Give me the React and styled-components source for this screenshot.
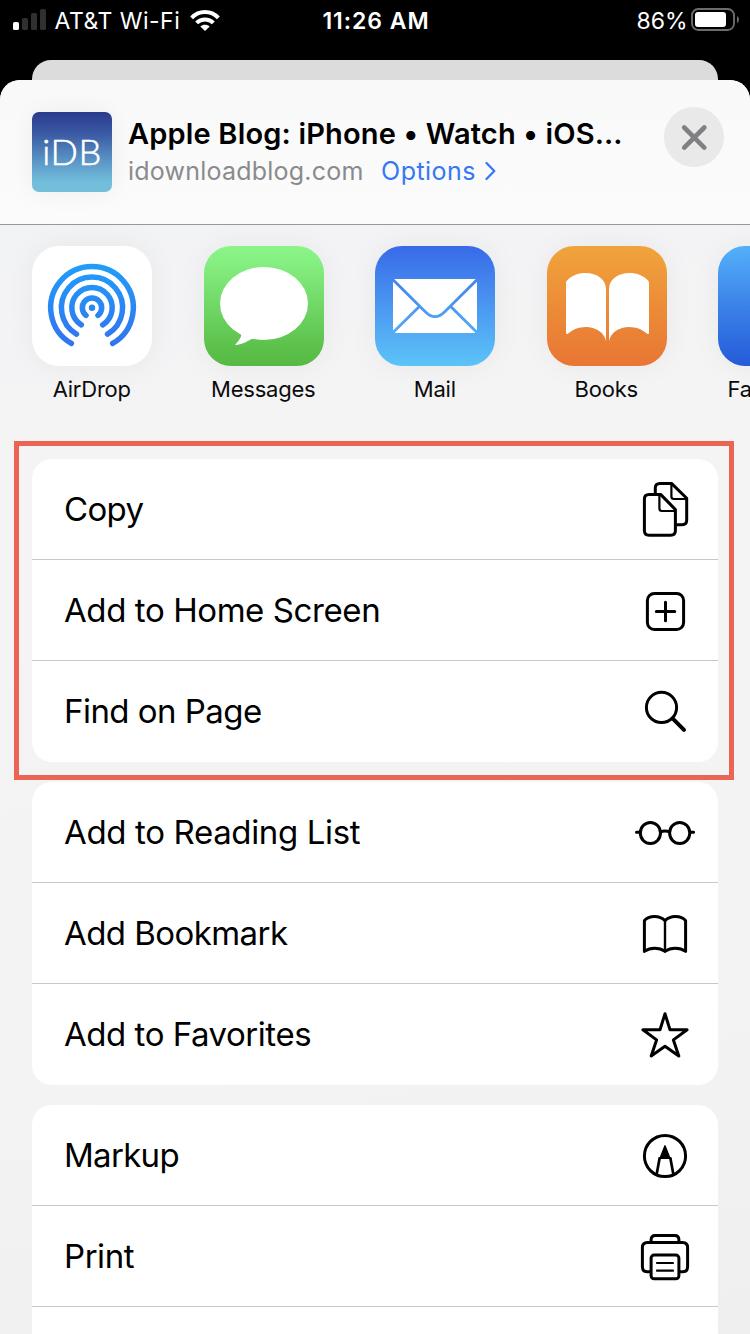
import React from 'react';
import styled, { createGlobalStyle } from 'styled-components';

const GlobalStyle = createGlobalStyle`
  * { box-sizing: border-box; }
  body {
    margin: 0;
    background: #000;
    font-family: Inter, "Liberation Sans", sans-serif;
    overflow: hidden;
  }
  svg { display: block; }
`;

const Screen = styled.main`
  width: 750px;
  height: 1334px;
  background: #000;
  display: flex;
  flex-direction: column;
  overflow: hidden;
`;

/* ---------- status bar ---------- */

const StatusBar = styled.header`
  height: 60px;
  flex: none;
  padding: 0 11px 20px 13px;
  display: grid;
  grid-template-columns: 1fr auto 1fr;
  align-items: center;
  color: #fff;
  font-size: 23px;
`;

const StatusSide = styled.div`
  display: flex;
  align-items: center;
  justify-content: ${(p) => (p.$end ? 'flex-end' : 'flex-start')};
`;

const StatusText = styled.span`
  white-space: nowrap;
  line-height: 38px;
  padding-top: 2px;
  font-weight: ${(p) => p.$weight || 400};
  letter-spacing: ${(p) => p.$track || 0}px;
  margin: ${(p) => p.$margin || 0};
`;

/* ---------- sheet ---------- */

const BackCard = styled.div`
  height: 20px;
  flex: none;
  margin: 0 32px;
  background: #dcdcdc;
  border-radius: 19px 19px 0 0;
`;

const SheetBackdrop = styled.div`
  flex: 1;
  min-height: 0;
  display: flex;
`;

const Sheet = styled.section`
  flex: 1;
  min-width: 0;
  display: flex;
  flex-direction: column;
  border-radius: 20px 20px 0 0;
  overflow: hidden;
  background: linear-gradient(170deg, #f1f2f4 0%, #f4f4f5 30%, #f3f3f3 75%, #efefef 100%);
`;

const SheetHeader = styled.div`
  height: 145px;
  flex: none;
  padding: 32px 26px 0 32px;
  display: flex;
  align-items: flex-start;
  border-bottom: 1px solid #98979d;
  background: linear-gradient(180deg, #f8f9f8 0%, #fafafb 50%, #fbfbfb 100%);
`;

const SiteIcon = styled.div`
  width: 80px;
  height: 80px;
  border-radius: 7px;
  display: flex;
  align-items: center;
  justify-content: center;
  color: #fff;
  font: 300 36px/76px Lato, sans-serif;
  letter-spacing: 0.6px;
  padding: 0 0 3px 0;
  -webkit-text-stroke: 0.6px #fff;
  background: linear-gradient(180deg, #2b3a8d 0%, #3b5ba4 28%, #5b97c7 62%, #72bedb 88%, #72bedb 100%);
  box-shadow: 0 0 24px rgba(0, 0, 0, 0.06);
`;

const SiteInfo = styled.div`
  flex: 1;
  min-width: 0;
  margin-left: 16px;
  padding-top: 3px;
`;

const SiteTitle = styled.h1`
  margin: 0;
  font-size: 29px;
  font-weight: 600;
  line-height: 38px;
  letter-spacing: 0.17px;
  white-space: nowrap;
  color: #000;
`;

const SiteMeta = styled.div`
  display: flex;
  align-items: center;
  font-size: 25px;
  line-height: 36px;
`;

const Domain = styled.span`
  color: #8a8a8e;
  letter-spacing: 0.22px;
`;

const Options = styled.a`
  display: flex;
  align-items: center;
  gap: 9px;
  margin-left: 17.5px;
  color: #3478f6;
  letter-spacing: 0.45px;
`;

const CloseButton = styled.button`
  width: 60px;
  height: 60px;
  margin-top: -5px;
  padding: 0;
  border: 0;
  border-radius: 50%;
  background: #e9e9ea;
  display: flex;
  align-items: center;
  justify-content: center;
`;

/* ---------- app row ---------- */

const AppRow = styled.div`
  height: 234px;
  flex: none;
  padding: 21px 0 0 32px;
  display: flex;
  gap: 51.5px;
`;

const AppItem = styled.div`
  width: 120px;
  flex: none;
  display: flex;
  flex-direction: column;
  align-items: center;
`;

const AppIcon = styled.div`
  width: 120px;
  height: 120px;
  border-radius: 27px;
  overflow: hidden;
  background: ${(p) => p.$fill};
  box-shadow: 0 0 30px rgba(0, 0, 0, 0.05);
`;

const AppLabel = styled.span`
  margin-top: 9px;
  padding-right: 0.5px;
  font-size: 22px;
  line-height: 28px;
  letter-spacing: -0.22px;
  white-space: nowrap;
  color: #0b0b0b;
`;

/* ---------- action lists ---------- */

const Actions = styled.div`
  padding: 0 32px;
  display: flex;
  flex-direction: column;
  gap: 20px;
`;

const GroupWrap = styled.div`
  position: relative;
`;

const Group = styled.ul`
  list-style: none;
  margin: 0;
  padding: 0;
  border-radius: 20px;
  overflow: hidden;
  background: #fff;
`;

const Row = styled.li`
  height: 101px;
  padding: 0 23px 0 32px;
  display: flex;
  align-items: center;
  justify-content: space-between;
  border-bottom: 1px solid #c8c8ca;
  color: #000;
  &:last-child { border-bottom-color: transparent; }
`;

const RowLabel = styled.span`
  font-size: 33px;
  line-height: 40px;
  letter-spacing: ${(p) => p.$track}px;
  white-space: nowrap;
`;

const Highlight = styled.div`
  position: absolute;
  inset: -18px -16px -18px -18px;
  border: 5px solid #ec6453;
  pointer-events: none;
  z-index: 1;
`;

const RowIcon = styled.svg.attrs({ width: 60, height: 60, viewBox: '0 0 60 60' })`
  fill: none;
  stroke: #000;
  stroke-width: 3;
  stroke-linecap: round;
  stroke-linejoin: round;
`;

/* ---------- drawings ---------- */

const Signal = () => (
  <svg width="34" height="40" viewBox="0 0 34 40">
    <rect x="0" y="22" width="6" height="8" rx="1.6" fill="#fff" />
    <rect x="9" y="18" width="6" height="12" rx="1.6" fill="#303030" />
    <rect x="18" y="13" width="6" height="17" rx="1.6" fill="#303030" />
    <rect x="27" y="9" width="6" height="21" rx="1.6" fill="#303030" />
  </svg>
);

const Wifi = () => (
  <svg width="30" height="40" viewBox="0 0 30 40" fill="none" stroke="#fff" strokeWidth="4">
    <path d="M1.6 17.8 C9 10 21 10 28.4 17.8" />
    <path d="M6.6 22.9 C11.3 18.2 18.7 18.2 23.4 22.9" />
    <path d="M15 31 L10.3 26.4 C12.9 24.1 17.1 24.1 19.7 26.4 Z" fill="#fff" stroke="none" />
  </svg>
);

const Battery = () => (
  <svg width="48" height="40" viewBox="0 0 48 40">
    <rect x="1" y="9" width="42" height="21" rx="6.2" fill="none" stroke="#6c6c6c" strokeWidth="1.9" />
    <rect x="4" y="12" width="31" height="15" rx="3" fill="#fff" />
    <path d="M46 16 Q48 17 48 19.5 Q48 22 46 23 Z" fill="#6c6c6c" />
  </svg>
);

const Chevron = () => (
  <svg width="11" height="20" viewBox="0 0 11 20" fill="none" stroke="#3478f6" strokeWidth="2.3" strokeLinecap="round" strokeLinejoin="round">
    <path d="M1.5 2 L9.3 10 L1.5 18" />
  </svg>
);

const Cross = () => (
  <svg width="60" height="60" viewBox="0 0 60 60" stroke="#808083" strokeWidth="4.6" strokeLinecap="round">
    <path d="M20.2 20.5 L40.3 40.6 M40.3 20.5 L20.2 40.6" />
  </svg>
);

const ringArc = (r, deg) => {
  const a = (deg * Math.PI) / 180;
  const dx = r * Math.sin(a);
  const y = 61.7 + r * Math.cos(a);
  return `M${60 - dx} ${y} A${r} ${r} 0 1 1 ${60 + dx} ${y}`;
};

const AirDropArt = () => (
  <svg width="120" height="120" viewBox="0 0 120 120" fill="none">
    <defs>
      <linearGradient id="air" gradientUnits="userSpaceOnUse" x1="0" y1="18" x2="0" y2="101">
        <stop offset="0" stopColor="#1f9ef9" />
        <stop offset="1" stopColor="#3273ee" />
      </linearGradient>
    </defs>
    <g stroke="url(#air)" strokeWidth="5.5" strokeLinecap="round">
      <path d={ringArc(41.3, 30)} />
      <path d={ringArc(30.6, 30.5)} />
      <path d={ringArc(20.2, 32)} />
      <path d={ringArc(9.7, 38)} />
    </g>
    <circle cx="60" cy="61.7" r="3.2" fill="url(#air)" />
  </svg>
);

const MessagesArt = () => (
  <svg width="120" height="120" viewBox="0 0 120 120" fill="#fff">
    <ellipse cx="60" cy="57.5" rx="44" ry="36.5" />
    <path d="M34 84 C37.5 87 37.8 89 36.5 91.5 C35 94.5 33.4 96.6 31.6 98 C31 98.8 31.4 99.1 32.4 99 C39 98 44 95.3 47 93.3 Q48.5 92.6 51 93 L56 86 Z" />
  </svg>
);

const MailArt = () => (
  <svg width="120" height="120" viewBox="0 0 120 120">
    <mask id="envelope">
      <rect x="18" y="33" width="84" height="54" rx="2" fill="#fff" />
      <g fill="none" stroke="#000" strokeWidth="2.8">
        <path d="M17 32.8 L50 65.6 Q60 75.8 70 65.6 L103 32.8" />
        <path d="M44.6 60.2 L17 87.6 M75.4 60.2 L103 87.6" />
      </g>
    </mask>
    <rect width="120" height="120" fill="#fff" mask="url(#envelope)" />
  </svg>
);

const page =
  'M19 37 Q19 35.6 20 34.6 C24.5 29.6 31 27 38.5 27 C50 27 59 33.5 59 43 V95 C57.3 86.5 48.5 81 39 81 C31.5 81 25.5 83.8 21.2 87.6 Q19 89 19 86.6 Z';

const BooksArt = () => (
  <svg width="120" height="120" viewBox="0 0 120 120" fill="#fff">
    <path d={page} />
    <path d={page} transform="translate(121 0) scale(-1 1)" />
  </svg>
);

const CopyIcon = () => (
  <RowIcon>
    <path d="M20.3 14 V9 Q20.3 4.4 24.9 4.4 H36.5 L51.7 19.2 V41 Q51.7 45.7 47 45.7 H41.5" />
    <path d="M36.4 5 V17.6 Q36.4 20 38.8 20 H51" strokeWidth="2.2" />
    <path d="M14 15.4 H25.6 L40.4 30.6 V51.6 Q40.4 56.3 35.7 56.3 H14 Q9.4 56.3 9.4 51.6 V20 Q9.4 15.4 14 15.4 Z" fill="#fff" />
    <path d="M24.4 16 V29.6 Q24.4 32 26.8 32 H40" strokeWidth="2.2" />
  </RowIcon>
);

const PlusIcon = () => (
  <RowIcon>
    <rect x="12.4" y="13.4" width="36.2" height="36.2" rx="7" />
    <path d="M30.5 22.3 V40.7 M21.3 31.5 H39.7" />
  </RowIcon>
);

const SearchIcon = () => (
  <RowIcon>
    <circle cx="26.5" cy="26.4" r="15.1" />
    <path d="M37.8 37.6 L49 48.9" strokeWidth="4" />
  </RowIcon>
);

const GlassesIcon = () => (
  <RowIcon>
    <ellipse cx="15.4" cy="31" rx="10.1" ry="10.5" />
    <ellipse cx="44.7" cy="31" rx="10.1" ry="10.5" />
    <path d="M25.6 29.8 Q30 28.4 34.5 29.8 M1.5 30.3 H5 M55.2 30.3 H58.6" />
  </RowIcon>
);

const BookmarkIcon = () => (
  <RowIcon>
    <path d="M30 17.6 C27 14.6 23.5 13.4 19.7 13.4 C15.9 13.4 11.5 14.8 9.4 17.6 V48.4 C12.5 46.2 16 45.2 19.7 45.2 C23.5 45.2 27 46.2 30 48.4 C33 46.2 36.6 45.2 40.3 45.2 C44 45.2 47.6 46.2 50.6 48.4 V17.6 C48.5 14.8 44 13.4 40.3 13.4 C36.5 13.4 33 14.6 30 17.6 Z" />
    <path d="M30 17.6 V48.4" strokeWidth="2.4" />
  </RowIcon>
);

const StarIcon = () => (
  <RowIcon>
    <path d="M30 9.8 L35 25.8 L52.1 25.8 L38.4 35.9 L43.8 52 L30 42.3 L16.2 52 L21.6 35.9 L7.9 25.8 L25 25.8 Z" />
  </RowIcon>
);

const MarkupIcon = () => (
  <RowIcon>
    <circle cx="30" cy="31" r="20.6" />
    <path d="M30 20.8 L34.8 33 H25.2 Z" fill="#000" strokeWidth="1.4" />
    <path d="M24.6 33.3 L21.8 48.6 M35.4 33.3 L38.2 48.6" strokeWidth="2.7" />
    <path d="M24.8 33.1 H35.2" strokeWidth="2" />
  </RowIcon>
);

const PrintIcon = () => (
  <RowIcon>
    <path d="M16.1 15.8 V13.6 Q16.1 9.4 20.3 9.4 H39.7 Q43.9 9.4 43.9 13.6 V15.8" />
    <path d="M15.5 45.8 H12.4 Q7.4 45.8 7.4 40.8 V21.6 Q7.4 16.6 12.4 16.6 H47.6 Q52.6 16.6 52.6 21.6 V40.8 Q52.6 45.8 47.6 45.8 H44.5" />
    <rect x="16.1" y="29.1" width="27.8" height="23.6" rx="3" />
    <path d="M22 37 H38 M22 44.7 H38" strokeWidth="2.2" />
  </RowIcon>
);

/* ---------- data ---------- */

const apps = [
  { name: 'AirDrop', fill: '#fff', Art: AirDropArt },
  { name: 'Messages', fill: 'linear-gradient(180deg, #8bf587 0%, #85ee80 15%, #5cc14b 85%, #56b944 100%)', Art: MessagesArt },
  { name: 'Mail', fill: 'linear-gradient(180deg, #386ae8 0%, #4b97f1 50%, #5cc4f8 100%)', Art: MailArt },
  { name: 'Books', fill: 'linear-gradient(180deg, #f0a43c 0%, #ec8c37 50%, #e87634 100%)', Art: BooksArt },
  { name: 'Facebook', fill: 'linear-gradient(180deg, #54b0fa 0%, #3b82e8 50%, #255ad8 100%)' },
];

const groups = [
  {
    highlighted: true,
    rows: [
      { label: 'Copy', track: -0.65, Icon: CopyIcon },
      { label: 'Add to Home Screen', track: -0.41, Icon: PlusIcon },
      { label: 'Find on Page', track: -0.54, Icon: SearchIcon },
    ],
  },
  {
    rows: [
      { label: 'Add to Reading List', track: -0.35, Icon: GlassesIcon },
      { label: 'Add Bookmark', track: -0.56, Icon: BookmarkIcon },
      { label: 'Add to Favorites', track: -0.46, Icon: StarIcon },
    ],
  },
  {
    rows: [
      { label: 'Markup', track: -0.7, Icon: MarkupIcon },
      { label: 'Print', track: -0.45, Icon: PrintIcon },
      { label: '', track: 0 },
    ],
  },
];

export default function App() {
  return (
    <Screen>
      <GlobalStyle />
      <StatusBar>
        <StatusSide>
          <Signal />
          <StatusText $track={0.5} $margin="0 9.5px 0 7.5px">AT&amp;T Wi-Fi</StatusText>
          <Wifi />
        </StatusSide>
        <StatusText $weight={600} $track={0.95}>11:26 AM</StatusText>
        <StatusSide $end>
          <StatusText $track={0} $margin="0 3.5px 0 0">86%</StatusText>
          <Battery />
        </StatusSide>
      </StatusBar>
      <BackCard />
      <SheetBackdrop>
        <Sheet>
          <SheetHeader>
            <SiteIcon>iDB</SiteIcon>
            <SiteInfo>
              <SiteTitle>Apple Blog: iPhone • Watch • iOS…</SiteTitle>
              <SiteMeta>
                <Domain>idownloadblog.com</Domain>
                <Options>
                  Options
                  <Chevron />
                </Options>
              </SiteMeta>
            </SiteInfo>
            <CloseButton aria-label="Close">
              <Cross />
            </CloseButton>
          </SheetHeader>
          <AppRow>
            {apps.map(({ name, fill, Art }) => (
              <AppItem key={name}>
                <AppIcon $fill={fill}>{Art && <Art />}</AppIcon>
                <AppLabel>{name}</AppLabel>
              </AppItem>
            ))}
          </AppRow>
          <Actions>
            {groups.map((group, i) => (
              <GroupWrap key={i}>
                <Group>
                  {group.rows.map(({ label, track, Icon }) => (
                    <Row key={label}>
                      <RowLabel $track={track}>{label}</RowLabel>
                      {Icon && <Icon />}
                    </Row>
                  ))}
                </Group>
                {group.highlighted && <Highlight />}
              </GroupWrap>
            ))}
          </Actions>
        </Sheet>
      </SheetBackdrop>
    </Screen>
  );
}
